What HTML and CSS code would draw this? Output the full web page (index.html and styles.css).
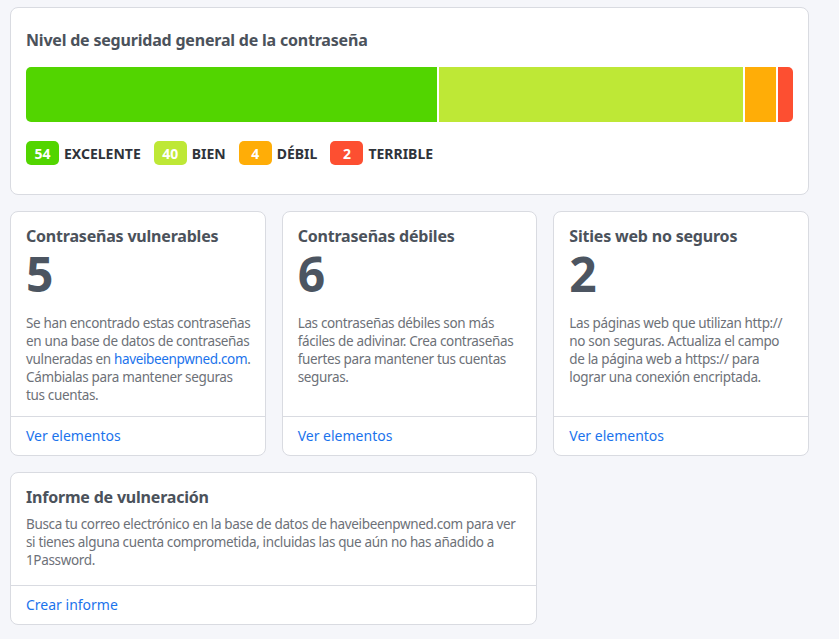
FILE: index.html
```html
<!DOCTYPE html>
<html lang="es">
<head>
  <meta charset="UTF-8">
  <meta name="viewport" content="width=device-width, initial-scale=1.0">
  <title>Watchtower</title>
  <link rel="stylesheet" href="styles.css">
</head>
<body>
  <div class="card overview">
    <h2 class="card-title">Nivel de seguridad general de la contraseña</h2>
    <div class="strength-bar">
      <div class="seg excellent" style="flex-grow: 54"></div>
      <div class="seg good" style="flex-grow: 40"></div>
      <div class="seg weak" style="flex-grow: 4"></div>
      <div class="seg terrible" style="flex-grow: 2"></div>
    </div>
    <div class="legend">
      <div class="legend-item"><span class="badge excellent">54</span>EXCELENTE</div>
      <div class="legend-item"><span class="badge good">40</span>BIEN</div>
      <div class="legend-item"><span class="badge weak">4</span>DÉBIL</div>
      <div class="legend-item"><span class="badge terrible">2</span>TERRIBLE</div>
    </div>
  </div>

  <div class="grid">
    <div class="card stat">
      <div class="card-body">
        <h2 class="card-title">Contraseñas vulnerables</h2>
        <div class="count">5</div>
        <p class="desc">Se han encontrado estas contraseñas en una base de datos de contraseñas vulneradas en <a href="#">haveibeenpwned.com</a>. Cámbialas para mantener seguras tus cuentas.</p>
      </div>
      <div class="card-footer"><a href="#">Ver elementos</a></div>
    </div>

    <div class="card stat">
      <div class="card-body">
        <h2 class="card-title">Contraseñas débiles</h2>
        <div class="count">6</div>
        <p class="desc">Las contraseñas débiles son más fáciles de adivinar. Crea contraseñas fuertes para mantener tus cuentas seguras.</p>
      </div>
      <div class="card-footer"><a href="#">Ver elementos</a></div>
    </div>

    <div class="card stat">
      <div class="card-body">
        <h2 class="card-title">Sities web no seguros</h2>
        <div class="count">2</div>
        <p class="desc">Las páginas web que utilizan http:// no son seguras. Actualiza el campo de la página web a https:// para lograr una conexión encriptada.</p>
      </div>
      <div class="card-footer"><a href="#">Ver elementos</a></div>
    </div>

    <div class="card stat wide">
      <div class="card-body">
        <h2 class="card-title">Informe de vulneración</h2>
        <p class="desc">Busca tu correo electrónico en la base de datos de haveibeenpwned.com para ver si tienes alguna cuenta comprometida, incluidas las que aún no has añadido a 1Password.</p>
      </div>
      <div class="card-footer"><a href="#">Crear informe</a></div>
    </div>
  </div>
</body>
</html>
```

FILE: styles.css
```css
body {
  margin: 0;
  padding: 7px 30px 16px 10px;
  background: #f5f6fa;
  font-family: "Noto Sans", "Open Sans", sans-serif;
  color: #4b525b;
}

.card {
  background: #fff;
  border: 1px solid #d9dbe1;
  border-radius: 8px;
  box-sizing: border-box;
}

.card-title {
  margin: 0;
  font-size: 16px;
  line-height: 20px;
  font-weight: 700;
  letter-spacing: -0.2px;
  color: #4b525b;
}

.overview {
  padding: 22px 15px 29px;
  margin-bottom: 16px;
}

.strength-bar {
  display: flex;
  gap: 2px;
  height: 55px;
  margin-top: 17px;
  border-radius: 5px;
  overflow: hidden;
}

.seg {
  flex-basis: 0;
}

.excellent { background: #52d500; }
.good { background: #bee836; }
.weak { background: #ffad07; }
.terrible { background: #fd4f31; }

.legend {
  display: flex;
  gap: 13px;
  margin-top: 19px;
}

.legend-item {
  display: flex;
  align-items: center;
  gap: 5px;
  font-size: 14px;
  font-weight: 700;
  color: #2f333a;
}

.badge {
  width: 33px;
  height: 24px;
  border-radius: 5px;
  display: flex;
  align-items: center;
  justify-content: center;
  color: #fff;
  font-size: 14px;
  font-weight: 700;
}

.grid {
  display: grid;
  grid-template-columns: repeat(3, 1fr);
  gap: 16px;
}

.stat {
  display: flex;
  flex-direction: column;
}

.stat.wide {
  grid-column: span 2;
}

.card-body {
  flex: 1;
  padding: 14px 12px 12px 15px;
}

.wide .card-body {
  padding-bottom: 16px;
}

.count {
  font-size: 48px;
  line-height: 54px;
  font-weight: 700;
  color: #4c5561;
  margin-top: 1px;
}

.desc {
  margin: 13px 0 0;
  font-size: 13.5px;
  line-height: 18px;
  letter-spacing: -0.35px;
  color: #6d7178;
}

.wide .desc {
  margin-top: 8px;
}

.desc a {
  color: #1b73ec;
  text-decoration: none;
}

.card-footer {
  border-top: 1px solid #d9dbe1;
  padding: 9px 15px 10px;
  font-size: 14px;
  line-height: 19px;
}

.card-footer a {
  color: #1b73ec;
  text-decoration: none;
}
```
